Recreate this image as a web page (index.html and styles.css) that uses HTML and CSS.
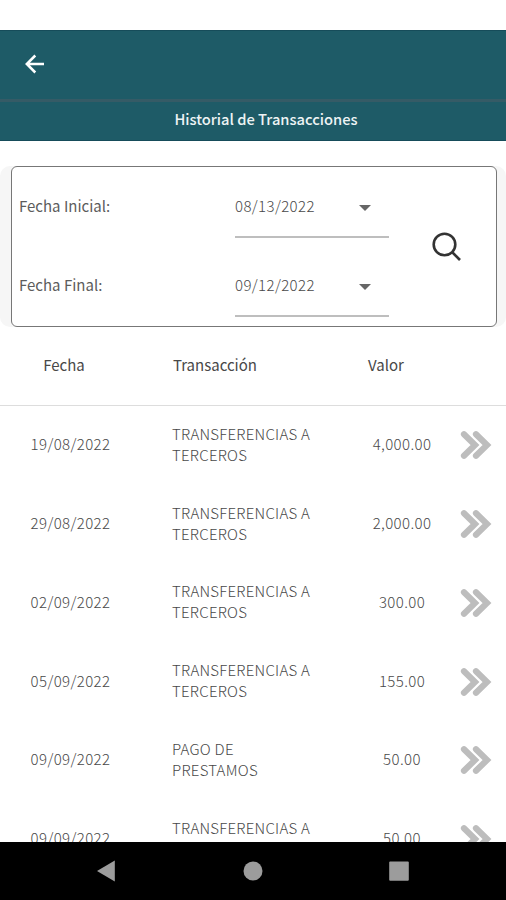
FILE: index.html
```html
<!DOCTYPE html>
<html lang="es">
<head>
<meta charset="utf-8">
<title>Historial de Transacciones</title>
<link rel="stylesheet" href="styles.css">
</head>
<body>
<svg class="defs" width="0" height="0" aria-hidden="true">
  <symbol id="chevrons" viewBox="0 0 32 30"><path d="M4 4.200 15 15 4 25.800M16 4.200 27 15 16 25.800"/></symbol>
</svg>
<div class="app">
  <header class="appbar">
    <svg class="back" viewBox="0 0 22 22"><path d="M20 11H3M11.300 2.500 2.800 11l8.500 8.500"/></svg>
  </header>
  <h1 class="title">Historial de Transacciones</h1>
  <section class="filter-band">
    <div class="filter">
      <div class="fields">
        <div class="field"><label>Fecha Inicial:</label><div class="picker"><span>08/13/2022</span><i class="caret"></i></div></div>
        <div class="field"><label>Fecha Final:</label><div class="picker"><span>09/12/2022</span><i class="caret"></i></div></div>
      </div>
      <svg class="search" viewBox="0 0 30 30"><circle cx="12.500" cy="12.500" r="10.800"/><path d="m20 20 8 8"/></svg>
    </div>
  </section>
  <main class="table">
    <div class="row head"><span class="date">Fecha</span><span class="kind">Transacción</span><span class="value">Valor</span></div>
    <div class="row"><span class="date">19/08/2022</span><span class="kind">TRANSFERENCIAS A<br>TERCEROS</span><span class="value">4,000.00</span><svg class="more"><use href="#chevrons"/></svg></div>
    <div class="row"><span class="date">29/08/2022</span><span class="kind">TRANSFERENCIAS A<br>TERCEROS</span><span class="value">2,000.00</span><svg class="more"><use href="#chevrons"/></svg></div>
    <div class="row"><span class="date">02/09/2022</span><span class="kind">TRANSFERENCIAS A<br>TERCEROS</span><span class="value">300.00</span><svg class="more"><use href="#chevrons"/></svg></div>
    <div class="row"><span class="date">05/09/2022</span><span class="kind">TRANSFERENCIAS A<br>TERCEROS</span><span class="value">155.00</span><svg class="more"><use href="#chevrons"/></svg></div>
    <div class="row"><span class="date">09/09/2022</span><span class="kind">PAGO DE<br>PRESTAMOS</span><span class="value">50.00</span><svg class="more"><use href="#chevrons"/></svg></div>
    <div class="row"><span class="date">09/09/2022</span><span class="kind">TRANSFERENCIAS A<br>TERCEROS</span><span class="value">50.00</span><svg class="more"><use href="#chevrons"/></svg></div>
  </main>
  <nav class="navbar">
    <svg viewBox="0 0 22 22"><path d="M2 11 19.800 .5v21z"/></svg>
    <svg viewBox="0 0 22 22"><circle cx="11" cy="11" r="9.500"/></svg>
    <svg viewBox="0 0 22 22"><rect x="1.200" y="1.400" width="19.600" height="19.400" rx="1"/></svg>
  </nav>
</div>
</body>
</html>
```
FILE: styles.css
```css
* { box-sizing: border-box; }
body {
  margin: 0;
  background: #fff;
  font-family: "Noto Sans CJK SC", "Noto Sans", sans-serif;
  font-size: 15px;
  font-weight: 300;
  color: #484848;
}
.defs { position: absolute; }
.app {
  display: flex;
  flex-direction: column;
  width: 506px;
  height: 900px;
  padding-top: 30px;
  overflow: hidden;
}
.appbar {
  flex: none;
  display: flex;
  align-items: center;
  height: 72px;
  padding: 0 24px 2px;
  background: #1e5b67;
  border-top: 1px solid #164c5a;
  border-bottom: 3px solid #355b66;
}
.back {
  width: 22px;
  height: 22px;
  fill: none;
  stroke: #fff;
  stroke-width: 2.5;
}
.title {
  flex: none;
  height: 39px;
  margin: 0;
  padding-left: 26px;
  background: #1e5b67;
  border-bottom: 1px solid #164c5a;
  color: #edf3f4;
  font-size: 14.7px;
  font-weight: 500;
  line-height: 34px;
  text-align: center;
}
.filter-band {
  flex: none;
  height: 161px;
  margin-top: 25px;
  padding: 0 9px 0 11px;
  background: #f6f6f6;
  border-radius: 10px;
}
.filter {
  display: flex;
  align-items: center;
  height: 161px;
  padding-left: 7px;
  background: #fff;
  border: 1px solid #777;
  border-radius: 6px;
}
.fields { width: 370px; }
.field {
  display: grid;
  grid-template-columns: 216px 154px;
  height: 79px;
  line-height: 22px;
}
.field label {
  padding-top: 27px;
  font-size: 15px;
  font-weight: 400;
  color: #5c5c5c;
}
.picker {
  display: flex;
  justify-content: space-between;
  align-items: flex-start;
  height: 70px;
  padding: 27px 18px 0 0;
  border-bottom: 2px solid #bebebe;
  letter-spacing: .38px;
}
.caret {
  width: 0;
  margin-top: 10px;
  border: 6px solid transparent;
  border-top-color: #666;
  border-bottom: 0;
}
.search {
  width: 30px;
  height: 30px;
  margin-left: 43px;
  fill: none;
  stroke: #333;
  stroke-width: 2.6;
}
.table {
  flex: 1;
  min-height: 0;
  overflow: hidden;
}
.row {
  display: grid;
  grid-template-columns: 141px 190px 142px 33px;
  align-items: center;
  height: 78.75px;
  line-height: 21px;
  letter-spacing: .38px;
}
.row > span { padding-bottom: 3px; }
.row.head {
  grid-template-columns: 128px 190px 136px;
  height: 79px;
  border-bottom: 1px solid #ddd;
  font-weight: 400;
  letter-spacing: 0;
}
.date, .value { text-align: center; }
.row .kind {
  padding-left: 31px;
  letter-spacing: .25px;
}
.row.head .kind {
  padding-left: 45px;
  letter-spacing: 0;
}
.more {
  width: 32px;
  height: 30px;
  margin-left: -13px;
  fill: none;
  stroke: #bdbdbd;
  stroke-width: 6.2;
  stroke-linecap: round;
}
.navbar {
  flex: none;
  display: flex;
  justify-content: space-between;
  align-items: center;
  height: 58px;
  padding: 0 96px 0 95px;
  background: #000;
}
.navbar svg {
  width: 22px;
  height: 22px;
  fill: #9c9c9c;
}
```
